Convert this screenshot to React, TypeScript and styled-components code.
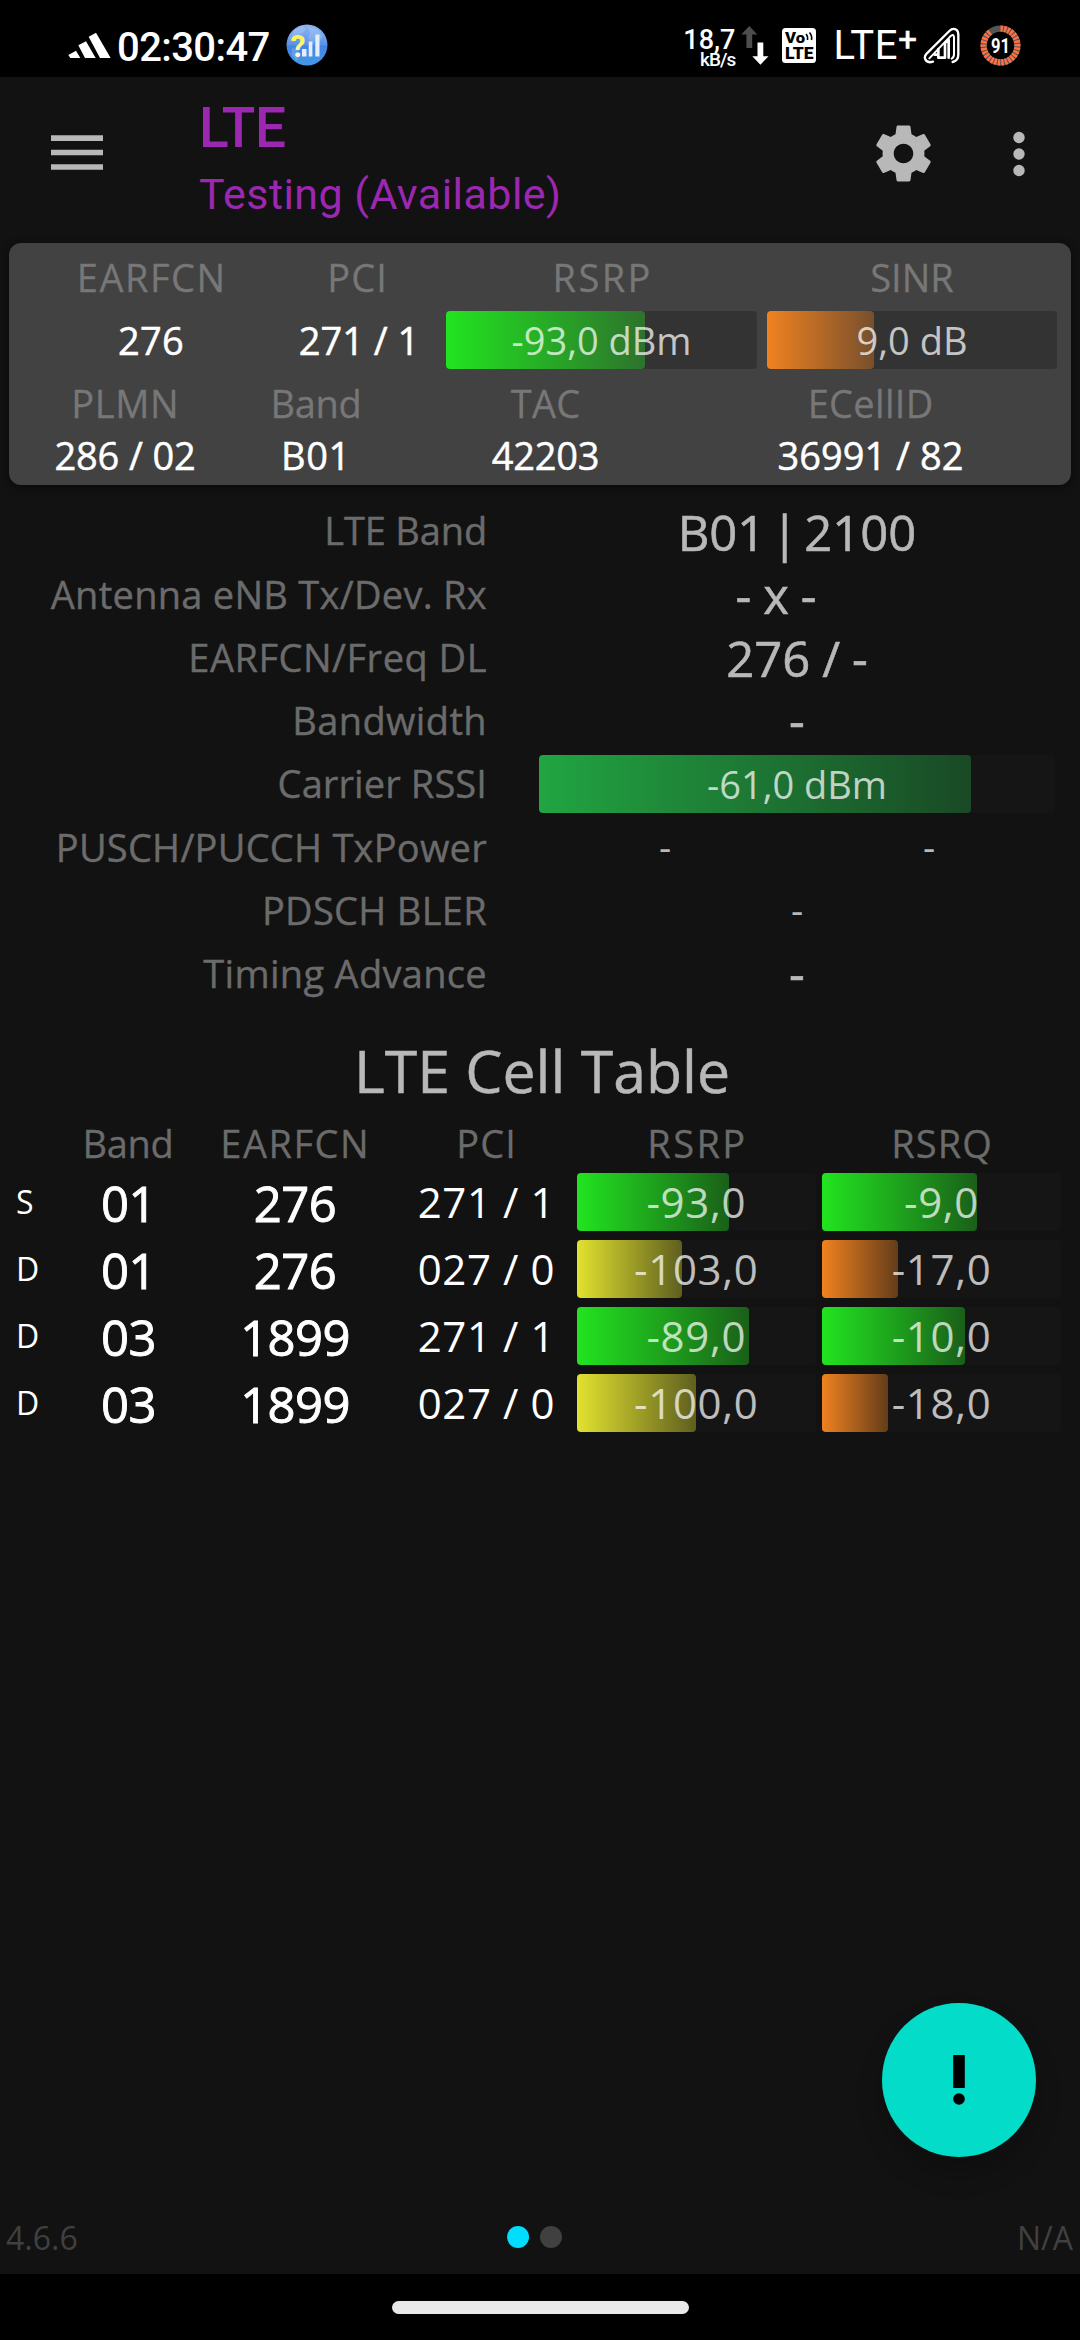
import React from 'react';
import styled, { createGlobalStyle } from 'styled-components';

const GlobalStyle = createGlobalStyle`
  * { box-sizing: border-box; }
  body { margin: 0; background: #121212; overflow: hidden; }
`;

const ui = '"Open Sans", "Noto Sans", sans-serif';
const system = 'Roboto, "Noto Sans", sans-serif';

const Screen = styled.div`
  position: relative;
  display: flex;
  flex-direction: column;
  width: 1080px;
  height: 2340px;
  overflow: hidden;
  background: #121212;
  font-family: ${ui};
  white-space: nowrap;
`;

/* ---------- status bar ---------- */

const StatusBar = styled.header`
  display: flex;
  align-items: center;
  justify-content: space-between;
  height: 77px;
  padding: 13px 59px 0 68px;
  background: #000;
  color: #fff;
  font-family: ${system};
`;

const StatusGroup = styled.div`
  display: flex;
  align-items: center;
`;

const Clock = styled.time`
  margin: 5px 16px 0 6px;
  font-size: 40px;
  font-weight: 500;
  line-height: 48px;
  letter-spacing: -0.6px;
`;

const Speed = styled.div`
  display: flex;
  flex-direction: column;
  align-items: flex-end;
  margin: 9px 6px 0 0;
  font-weight: 500;
  line-height: 20px;
`;

const SpeedValue = styled.span`
  font-size: 27px;
`;

const SpeedUnit = styled.span`
  font-size: 19px;
  letter-spacing: -0.9px;
`;

const Arrows = styled.svg`
  margin-right: 13px;
`;

const Network = styled.span`
  display: flex;
  align-items: center;
  margin: 1px 6px 0 17px;
  font-size: 40px;
  line-height: 40px;
  letter-spacing: 0.7px;
`;

const Plus = styled.sup`
  margin-bottom: 13px;
  font-size: 33px;
  line-height: 33px;
  letter-spacing: 0;
  vertical-align: baseline;
  -webkit-text-stroke: 0.6px #fff;
`;

const BatteryRing = styled.svg`
  margin-left: 20px;
`;

/* ---------- app bar ---------- */

const AppBar = styled.div`
  display: flex;
  align-items: center;
  height: 153px;
  padding: 0 47px 0 51px;
`;

const TitleBlock = styled.div`
  flex: 1;
  display: flex;
  flex-direction: column;
  gap: 2px;
  margin-left: 96px;
  padding-top: 15px;
  color: #9c27b0;
  font-family: ${system};
  line-height: 64px;
`;

const Title = styled.h1`
  margin: 0;
  font-size: 55px;
  font-weight: 500;
  letter-spacing: -0.2px;
`;

const Subtitle = styled.p`
  margin: 0;
  font-size: 43px;
  letter-spacing: 0.45px;
`;

const MoreDots = styled.svg`
  margin-left: 68px;
`;

/* ---------- summary card ---------- */

const Card = styled.section`
  display: flex;
  flex-direction: column;
  width: 1062px;
  height: 242px;
  margin: 13px 9px 0;
  border-radius: 12px;
  background: #424242;
  box-shadow: 0 2px 8px 1px rgba(0, 0, 0, 0.45);
`;

const RadioRow = styled.div<{ $height: number }>`
  display: grid;
  grid-template-columns: 284px 128px 336px 300px;
  align-items: center;
  height: ${(p) => p.$height}px;
  text-align: center;

  & > :nth-child(3) { margin-left: 25px; }
  & > :nth-child(4) { margin-left: 10px; }
`;

const CellRow = styled.div<{ $height: number }>`
  display: grid;
  grid-template-columns: 232px 150px 309px 341px;
  align-items: center;
  height: ${(p) => p.$height}px;
  text-align: center;
`;

const CardLabel = styled.span<{ $track?: number }>`
  padding-left: ${(p) => Math.max(0, p.$track ?? 0)}px;
  color: #777;
  font-size: 38px;
  line-height: 40px;
  letter-spacing: ${(p) => p.$track ?? 0}px;
  -webkit-text-stroke: 0.3px #777;
`;

const CardValue = styled.span<{ $track?: number; $shift?: number }>`
  padding-left: ${(p) => p.$shift ?? 0}px;
  color: #fff;
  font-size: 38px;
  line-height: 39px;
  letter-spacing: ${(p) => p.$track ?? 0}px;
  -webkit-text-stroke: 0.5px #fff;
`;

/* ---------- meter bar ---------- */

const tones = {
  green: '34, 228, 32',
  forest: '33, 165, 66',
  yellow: '226, 226, 48',
  orange: '240, 130, 32',
};
type Tone = keyof typeof tones;

const Track = styled.div<{ $raised?: boolean }>`
  display: grid;
  align-items: center;
  height: 58px;
  border-radius: 4px;
  background: ${(p) => (p.$raised ? '#333' : '#151515')};
  & > * { grid-area: 1 / 1; }
`;

const Fill = styled.div<{ $tone: Tone }>`
  height: 58px;
  border-radius: 4px;
  background: linear-gradient(
    90deg,
    rgba(${(p) => tones[p.$tone]}, 1),
    rgba(${(p) => tones[p.$tone]}, 0.36)
  );
`;

const Reading = styled.span<{ $large?: boolean }>`
  color: rgba(255, 255, 255, 0.72);
  font-size: ${(p) => (p.$large ? 42 : 38)}px;
  letter-spacing: ${(p) => (p.$large ? 0.65 : 0)}px;
  line-height: 58px;
  text-align: center;
`;

type MeterProps = { tone: Tone; percent: number; text: string; raised?: boolean; large?: boolean };

const Meter = ({ tone, percent, text, raised, large }: MeterProps) => (
  <Track $raised={raised}>
    <Fill $tone={tone} style={{ width: `${percent}%` }} />
    <Reading $large={large}>{text}</Reading>
  </Track>
);

/* ---------- detail list ---------- */

const Details = styled.section`
  display: flex;
  flex-direction: column;
  padding-top: 13.7px;
`;

const DetailRow = styled.div`
  display: grid;
  grid-template-columns: 487px 528px;
  column-gap: 46px;
  align-items: center;
  height: 63.25px;
`;

const DetailLabel = styled.span<{ $track?: number }>`
  color: #6b6b6b;
  font-size: 38px;
  line-height: 40px;
  text-align: right;
  letter-spacing: ${(p) => p.$track ?? 0}px;
  -webkit-text-stroke: 0.4px #6b6b6b;
`;

const DetailValue = styled.span<{ $dash?: boolean; $inset?: number; $tight?: boolean }>`
  padding: ${(p) => (p.$dash ? 0 : 3)}px ${(p) => p.$inset ?? 0}px 0 0;
  color: #b8b8b8;
  font-size: 49px;
  line-height: 50px;
  text-align: center;
  word-spacing: ${(p) => (p.$tight ? -6.7 : -0.8)}px;
  -webkit-text-stroke: 0.6px #b8b8b8;
`;

const MeterSlot = styled.div`
  padding: 1px 6px 0;
`;

const SplitValue = styled.div<{ $count: number }>`
  display: grid;
  grid-template-columns: repeat(${(p) => p.$count}, 1fr);
  color: #b8b8b8;
  font-size: 38px;
  line-height: 38px;
  padding-bottom: 2px;
  text-align: center;
`;

/* ---------- cell table ---------- */

const SectionTitle = styled.h2`
  height: 111.3px;
  margin: 0;
  padding: 20px 0 0 4px;
  color: #b8b8b8;
  font-size: 59px;
  font-weight: 400;
  line-height: 91px;
  text-align: center;
  -webkit-text-stroke: 0.5px #b8b8b8;
`;

const TableRow = styled.div<{ $header?: boolean }>`
  display: grid;
  grid-template-columns: 48px 160px 173px 196px 238.5px 245.5px;
  align-items: center;
  height: ${(p) => (p.$header ? 52.5 : 67)}px;
  padding-top: ${(p) => (p.$header ? 2 : 0)}px;
  text-align: center;

  & > :nth-child(4) { margin-left: 14px; }
  & > :nth-child(6) { margin-left: 6.5px; }
`;

const ColumnLabel = styled.span<{ $track?: number }>`
  padding-left: ${(p) => Math.max(0, p.$track ?? 0)}px;
  color: #6b6b6b;
  font-size: 38px;
  line-height: 40px;
  letter-spacing: ${(p) => p.$track ?? 0}px;
  -webkit-text-stroke: 0.3px #6b6b6b;
`;

const Marker = styled.span`
  padding-left: 16px;
  color: #fff;
  font-size: 32px;
  line-height: 40px;
  text-align: left;
`;

const StrongCell = styled.span`
  padding: 2px 0 0 1px;
  color: #fff;
  font-size: 49px;
  line-height: 52px;
  letter-spacing: -0.6px;
  -webkit-text-stroke: 0.9px #fff;
`;

const PciCell = styled.span`
  padding: 1px 0 0 1px;
  color: #fff;
  font-size: 42px;
  line-height: 50px;
  letter-spacing: 0.6px;
`;

/* ---------- bottom ---------- */

const Fab = styled.button`
  position: absolute;
  top: 2003px;
  right: 44px;
  display: grid;
  place-items: center;
  width: 154px;
  height: 154px;
  padding: 0;
  border: 0;
  border-radius: 50%;
  background: #03dcc8;
  box-shadow: 0 16px 26px rgba(0, 0, 0, 0.22);
`;

const Footer = styled.footer`
  display: grid;
  grid-template-columns: 507px 55px 1fr;
  align-items: center;
  height: 72px;
  margin-top: auto;
  padding-right: 7px;
  color: #404040;
  font-size: 32px;
  line-height: 40px;
`;

const Version = styled.span`
  padding-left: 6px;
`;

const Status = styled.span`
  text-align: right;
`;

const Pager = styled.div`
  display: flex;
  gap: 11px;
  padding-bottom: 2px;
`;

const PageDot = styled.i<{ $active?: boolean }>`
  width: 22px;
  height: 22px;
  border-radius: 50%;
  background: ${(p) => (p.$active ? '#00ddff' : '#404040')};
`;

const NavBar = styled.nav`
  display: flex;
  justify-content: center;
  height: 66px;
  padding-top: 27px;
  background: #000;
`;

const Handle = styled.i`
  width: 297px;
  height: 13px;
  border-radius: 7px;
  background: #e9e9e9;
`;

/* ---------- drawings ---------- */

const Stripes = () => (
  <svg width="43" height="27" viewBox="26 40 129 79">
    <path
      fill="#fff"
      d="M88 53 110 41 154 117H122ZM57 79 80 67 109 117H77ZM27 108 50 95 63 117H33Z"
    />
  </svg>
);

const Globe = () => (
  <svg width="42" height="42" viewBox="0 0 42 42">
    <defs>
      <linearGradient id="sky" x1="0" y1="0" x2="0" y2="1">
        <stop offset="0" stopColor="#8fb6f2" />
        <stop offset="0.5" stopColor="#5a92e8" />
        <stop offset="0.52" stopColor="#4384e4" />
        <stop offset="1" stopColor="#459ae8" />
      </linearGradient>
      <linearGradient id="mark" x1="0" y1="0" x2="0" y2="1">
        <stop offset="0.3" stopColor="#f8f552" />
        <stop offset="0.95" stopColor="#fff" />
      </linearGradient>
    </defs>
    <circle cx="21" cy="21" r="20.5" fill="url(#sky)" />
    <path
      fill="#fff"
      opacity="0.16"
      d="M9 5l7-3 4 3-3 4-5 2-4 7-4-3zM22 3l9 2 6 7-3 5-5-2-2 5-5-6 2-5zM6 24l6 2 2 6-3 5-5-6z"
    />
    <text x="4.4" y="32.6" fontFamily="Roboto" fontWeight="700" fontSize="32" textLength="15" lengthAdjust="spacingAndGlyphs" fill="url(#mark)">
      ?
    </text>
    <path fill="#e4edfb" d="M16 25h4.500v7.500H16zM22.700 17.500h3.700v15h-3.700zM29.300 10.500h4.200v22h-4.200z" />
  </svg>
);

const VoLte = () => (
  <svg width="34" height="35" viewBox="0 0 34 35">
    <rect width="34" height="35" rx="3.500" fill="#fff" />
    <g fontFamily="Roboto" fontWeight="900" fill="#000">
      <text x="3" y="15.300" fontSize="15.500" textLength="20" lengthAdjust="spacingAndGlyphs">Vo</text>
      <text x="3" y="31" fontSize="16" textLength="28.500" lengthAdjust="spacingAndGlyphs">LTE</text>
    </g>
    <path d="M24 6q2 2 1.500 6M27.500 4.500q2.800 3 2 7.500" fill="none" stroke="#000" strokeWidth="1.600" />
  </svg>
);

const SignalIcon = () => (
  <svg width="37" height="37" viewBox="445 30 111 111">
    <g fill="none" stroke="#fff" strokeWidth="7" strokeLinecap="round" strokeLinejoin="round">
      <path d="M475 134Q456 140 451 125Q449 117 456 110L524 42Q534 32 545 38Q551 42 551 54V112Q551 132 534 135" />
      <path strokeWidth="6" d="M464 124 527 58Q537 49 538 61V112Q538 122 531 125" />
      <path strokeWidth="8" d="M480 113H491V96M491 113V122H511V78L522 68V122" />
    </g>
  </svg>
);

const segments = `${'2.35 1 '.repeat(27)}0 100`;

const Battery = () => (
  <BatteryRing width="41" height="41" viewBox="0 0 41 41">
    <g fill="none" strokeWidth="6.200" transform="rotate(-90 20.500 20.500)">
      <circle cx="20.500" cy="20.500" r="16.900" stroke="#555" />
      <circle cx="20.500" cy="20.500" r="16.900" stroke="#ff7043" pathLength="100" strokeDasharray={segments} />
    </g>
    <text x="20.500" y="28" textAnchor="middle" fontFamily="Roboto" fontWeight="700" fontSize="20.500" textLength="19" lengthAdjust="spacingAndGlyphs" fill="#fff">
      91
    </text>
  </BatteryRing>
);

const MenuIcon = () => (
  <svg width="52" height="38" viewBox="0 0 52 38">
    <path fill="#b8b8b8" d="M0 .3h52v5.600H0zM0 14.700h52v5.600H0zM0 29.200h52v5.600H0z" />
  </svg>
);

const Gear = () => (
  <svg width="67" height="67" viewBox="0 0 24 24">
    <path
      fill="#b8b8b8"
      d="M19.430 12.980c.04-.32.07-.64.07-.98s-.03-.66-.07-.98l2.110-1.650c.19-.15.24-.42.12-.64l-2-3.460c-.12-.22-.39-.3-.61-.22l-2.490 1c-.52-.4-1.080-.73-1.690-.98l-.38-2.650C14.460 2.180 14.250 2 14 2h-4c-.25 0-.46.18-.49.42l-.38 2.650c-.61.25-1.170.59-1.690.98l-2.490-1c-.23-.09-.49 0-.61.22l-2 3.460c-.13.22-.07.49.12.64l2.110 1.650c-.04.32-.07.65-.07.98s.03.66.07.98l-2.110 1.650c-.19.15-.24.42-.12.64l2 3.460c.12.22.39.3.61.22l2.490-1c.52.4 1.080.73 1.690.98l.38 2.650c.03.24.24.42.49.42h4c.25 0 .46-.18.49-.42l.38-2.650c.61-.25 1.170-.59 1.690-.98l2.490 1c.23.09.49 0 .61-.22l2-3.460c.12-.22.07-.49-.12-.64l-2.110-1.650zM12 15.500c-1.930 0-3.500-1.570-3.500-3.500s1.570-3.500 3.500-3.500 3.500 1.570 3.500 3.500-1.570 3.500-3.500 3.500z"
    />
  </svg>
);

/* ---------- data ---------- */

const cells: { mark: string; band: string; earfcn: string; pci: string; rsrp: MeterProps; rsrq: MeterProps }[] = [
  { mark: 'S', band: '01', earfcn: '276', pci: '271 / 1', rsrp: { tone: 'green', percent: 63.7, text: '-93,0' }, rsrq: { tone: 'green', percent: 64.8, text: '-9,0' } },
  { mark: 'D', band: '01', earfcn: '276', pci: '027 / 0', rsrp: { tone: 'yellow', percent: 44, text: '-103,0' }, rsrq: { tone: 'orange', percent: 31.8, text: '-17,0' } },
  { mark: 'D', band: '03', earfcn: '1899', pci: '271 / 1', rsrp: { tone: 'green', percent: 72.1, text: '-89,0' }, rsrq: { tone: 'green', percent: 59.8, text: '-10,0' } },
  { mark: 'D', band: '03', earfcn: '1899', pci: '027 / 0', rsrp: { tone: 'yellow', percent: 49.9, text: '-100,0' }, rsrq: { tone: 'orange', percent: 27.5, text: '-18,0' } },
];

export default function App() {
  return (
    <Screen>
      <GlobalStyle />

      <StatusBar>
        <StatusGroup>
          <Stripes />
          <Clock>02:30:47</Clock>
          <Globe />
        </StatusGroup>
        <StatusGroup>
          <Speed>
            <SpeedValue>18,7</SpeedValue>
            <SpeedUnit>kB/s</SpeedUnit>
          </Speed>
          <Arrows width="28" height="39" viewBox="0 0 28 39">
            <path fill="#4d4d4d" d="M8.300 0 16.300 8.500H11.200V22H5.400V8.500H.3Z" />
            <path fill="#fff" d="M16.500 16.500h5.800V30.200h5.200L19.400 38.700 11.300 30.200h5.200z" />
          </Arrows>
          <VoLte />
          <Network>
            LTE<Plus>+</Plus>
          </Network>
          <SignalIcon />
          <Battery />
        </StatusGroup>
      </StatusBar>

      <AppBar>
        <MenuIcon />
        <TitleBlock>
          <Title>LTE</Title>
          <Subtitle>Testing (Available)</Subtitle>
        </TitleBlock>
        <Gear />
        <MoreDots width="28" height="46" viewBox="0 0 28 46">
          <g fill="#b8b8b8">
            <circle cx="14" cy="6.500" r="5.700" />
            <circle cx="14" cy="23" r="5.700" />
            <circle cx="14" cy="39.500" r="5.700" />
          </g>
        </MoreDots>
      </AppBar>

      <Card>
        <RadioRow $height={67}>
          <CardLabel $track={1.5}>EARFCN</CardLabel>
          <CardLabel $track={1.1}>PCI</CardLabel>
          <CardLabel $track={2.4}>RSRP</CardLabel>
          <CardLabel>SINR</CardLabel>
        </RadioRow>
        <RadioRow $height={60}>
          <CardValue $track={0.2}>276</CardValue>
          <CardValue $shift={4}>271 / 1</CardValue>
          <Meter raised tone="green" percent={64} text="-93,0 dBm" />
          <Meter raised tone="orange" percent={36.9} text="9,0 dB" />
        </RadioRow>
        <CellRow $height={66}>
          <CardLabel $track={0.6}>PLMN</CardLabel>
          <CardLabel $track={-0.3}>Band</CardLabel>
          <CardLabel $track={0.3}>TAC</CardLabel>
          <CardLabel $track={0.3}>ECellID</CardLabel>
        </CellRow>
        <CellRow $height={38}>
          <CardValue $track={-0.15}>286 / 02</CardValue>
          <CardValue $track={0.6}>B01</CardValue>
          <CardValue $track={-0.2}>42203</CardValue>
          <CardValue>36991 / 82</CardValue>
        </CellRow>
      </Card>

      <Details>
        <DetailRow>
          <DetailLabel $track={-0.15}>LTE Band</DetailLabel>
          <DetailValue $tight>B01 | 2100</DetailValue>
        </DetailRow>
        <DetailRow>
          <DetailLabel $track={0.28}>Antenna eNB Tx/Dev. Rx</DetailLabel>
          <DetailValue $inset={42}>- x -</DetailValue>
        </DetailRow>
        <DetailRow>
          <DetailLabel $track={0.5}>EARFCN/Freq DL</DetailLabel>
          <DetailValue>276 / -</DetailValue>
        </DetailRow>
        <DetailRow>
          <DetailLabel $track={0.37}>Bandwidth</DetailLabel>
          <DetailValue $dash>-</DetailValue>
        </DetailRow>
        <DetailRow>
          <DetailLabel $track={0.1}>Carrier RSSI</DetailLabel>
          <MeterSlot>
            <Meter tone="forest" percent={83.7} text="-61,0 dBm" />
          </MeterSlot>
        </DetailRow>
        <DetailRow>
          <DetailLabel $track={0.25}>PUSCH/PUCCH TxPower</DetailLabel>
          <SplitValue $count={2}>
            <span>-</span>
            <span>-</span>
          </SplitValue>
        </DetailRow>
        <DetailRow>
          <DetailLabel $track={0.3}>PDSCH BLER</DetailLabel>
          <SplitValue $count={1}>
            <span>-</span>
          </SplitValue>
        </DetailRow>
        <DetailRow>
          <DetailLabel $track={0.31}>Timing Advance</DetailLabel>
          <DetailValue $dash>-</DetailValue>
        </DetailRow>
      </Details>

      <SectionTitle>LTE Cell Table</SectionTitle>
      <section>
        <TableRow $header>
          <span />
          <ColumnLabel $track={-0.3}>Band</ColumnLabel>
          <ColumnLabel $track={1.5}>EARFCN</ColumnLabel>
          <ColumnLabel $track={1.1}>PCI</ColumnLabel>
          <ColumnLabel $track={2.4}>RSRP</ColumnLabel>
          <ColumnLabel $track={1.1}>RSRQ</ColumnLabel>
        </TableRow>
        {cells.map((c, i) => (
          <TableRow key={i}>
            <Marker>{c.mark}</Marker>
            <StrongCell>{c.band}</StrongCell>
            <StrongCell>{c.earfcn}</StrongCell>
            <PciCell>{c.pci}</PciCell>
            <Meter large {...c.rsrp} />
            <Meter large {...c.rsrq} />
          </TableRow>
        ))}
      </section>

      <Footer>
        <Version>4.6.6</Version>
        <Pager>
          <PageDot $active />
          <PageDot />
        </Pager>
        <Status>N/A</Status>
      </Footer>
      <NavBar>
        <Handle />
      </NavBar>

      <Fab aria-label="Alert">
        <svg width="14" height="52" viewBox="0 0 14 52">
          <path d="M1.200 1h11.600v33H1.200z" />
          <circle cx="7" cy="45" r="5.800" />
        </svg>
      </Fab>
    </Screen>
  );
}
